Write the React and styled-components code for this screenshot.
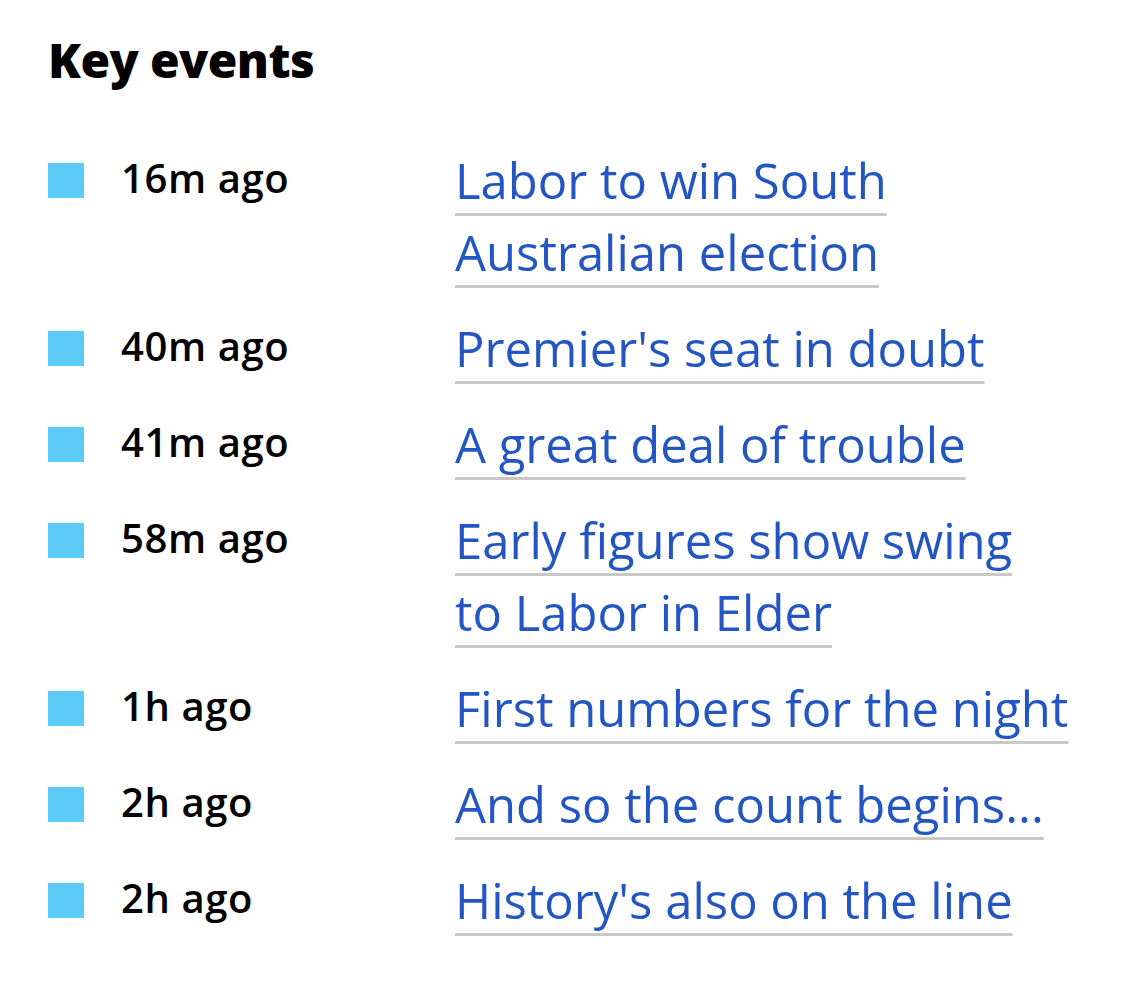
import React from "react";
import styled, { createGlobalStyle } from "styled-components";

const GlobalStyle = createGlobalStyle`
  body {
    margin: 0;
    background: #ffffff;
    font-family: "Open Sans", "Noto Sans", sans-serif;
  }
`;

const Panel = styled.section`
  padding: 35px 0 0 48px;
`;

const Heading = styled.h2`
  margin: 0;
  font-family: "Open Sans", sans-serif;
  font-weight: 800;
  font-size: 48px;
  line-height: 50px;
  letter-spacing: -0.6px;
  color: #000;
`;

const List = styled.ul`
  list-style: none;
  margin: 59px 0 0;
  padding: 0;
  display: flex;
  flex-direction: column;
  gap: 24px;
`;

const Item = styled.li`
  display: grid;
  grid-template-columns: 36px 371px 640px;
  align-items: start;
`;

const Marker = styled.span`
  display: block;
  width: 36px;
  height: 35px;
  margin-top: 19px;
  background: #5ccbf8;
`;

const Time = styled.span`
  padding-left: 37px;
  font-weight: 600;
  font-size: 40px;
  line-height: 68px;
  letter-spacing: 0.6px;
  color: #000;
`;

const Link = styled.a`
  font-size: 49px;
  line-height: 72px;
  color: #2356c2;
  text-decoration: underline;
  text-decoration-color: #c8c8c8;
  text-decoration-thickness: 3px;
  text-underline-offset: 14px;
  text-decoration-skip-ink: none;
  cursor: pointer;
`;

const events = [
  { time: "16m ago", title: "Labor to win South Australian election" },
  { time: "40m ago", title: "Premier's seat in doubt" },
  { time: "41m ago", title: "A great deal of trouble" },
  { time: "58m ago", title: "Early figures show swing to\u00a0Labor in Elder" },
  { time: "1h ago", title: "First numbers for the night" },
  { time: "2h ago", title: "And so the count begins..." },
  { time: "2h ago", title: "History's also on the line" },
];

const App = () => {
  return (
    <>
      <GlobalStyle />
      <Panel>
        <Heading>Key events</Heading>
        <List>
          {events.map((ev, i) => (
            <Item key={i}>
              <Marker />
              <Time>{ev.time}</Time>
              <div>
                <Link>{ev.title}</Link>
              </div>
            </Item>
          ))}
        </List>
      </Panel>
    </>
  );
};

export default App;
